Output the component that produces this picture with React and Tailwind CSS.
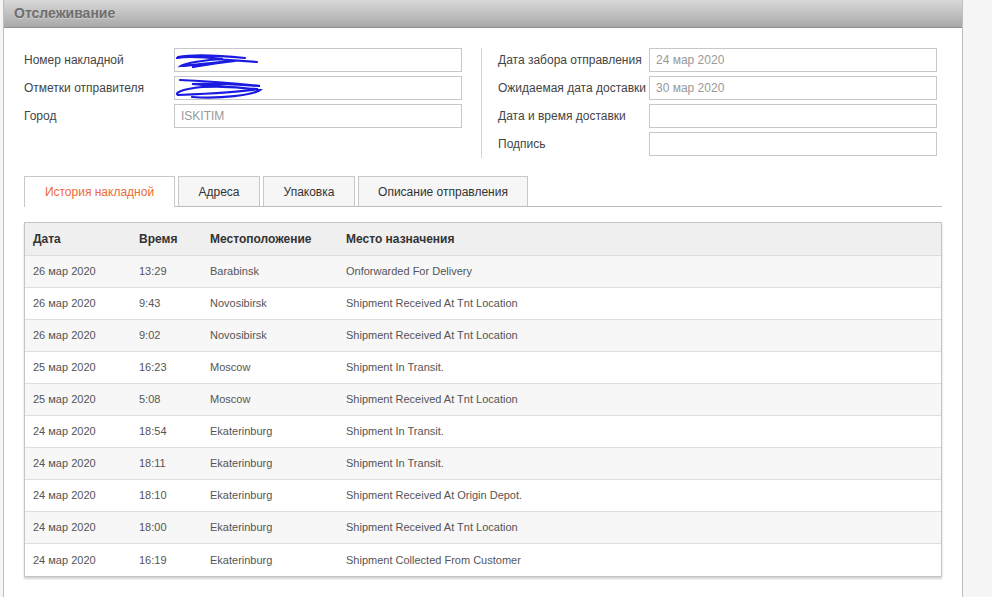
import React from "react";

const rows = [
  ["26 мар 2020", "13:29", "Barabinsk", "Onforwarded For Delivery"],
  ["26 мар 2020", "9:43", "Novosibirsk", "Shipment Received At Tnt Location"],
  ["26 мар 2020", "9:02", "Novosibirsk", "Shipment Received At Tnt Location"],
  ["25 мар 2020", "16:23", "Moscow", "Shipment In Transit."],
  ["25 мар 2020", "5:08", "Moscow", "Shipment Received At Tnt Location"],
  ["24 мар 2020", "18:54", "Ekaterinburg", "Shipment In Transit."],
  ["24 мар 2020", "18:11", "Ekaterinburg", "Shipment In Transit."],
  ["24 мар 2020", "18:10", "Ekaterinburg", "Shipment Received At Origin Depot."],
  ["24 мар 2020", "18:00", "Ekaterinburg", "Shipment Received At Tnt Location"],
  ["24 мар 2020", "16:19", "Ekaterinburg", "Shipment Collected From Customer"],
];

function Field({ label, value, children, labelW = "w-[150px]" }) {
  return (
    <div className="flex items-center h-[24px]">
      <div className={`${labelW} shrink-0 text-[12px] text-[#444]`}>{label}</div>
      <div className="relative w-[288px] h-[24px] border border-[#c8c8c8] bg-white flex items-center px-[6px] text-[12px] text-[#999]">
        {value}
        {children}
      </div>
    </div>
  );
}

function Scribble1() {
  return (
    <svg className="absolute left-0 top-[1px]" width="90" height="22" viewBox="0 0 90 22">
      <path d="M3 7 C20 4, 50 6, 70 8 M2 8 C10 6, 30 7, 48 9 C30 10, 10 13, 6 16 C20 15, 40 12, 60 11 C50 12, 30 15, 18 17 M40 9 L82 12" stroke="#1a1ae0" strokeWidth="2.2" fill="none" strokeLinecap="round" />
    </svg>
  );
}

function Scribble2() {
  return (
    <svg className="absolute left-[-3px] top-[-2px]" width="100" height="28" viewBox="0 0 100 28">
      <path d="M8 5 C30 6, 60 8, 88 11 C70 10, 40 8, 20 9 C40 11, 70 13, 86 14 C70 17, 30 19, 6 20 C2 18, 10 14, 30 12 C50 11, 75 13, 88 15 C80 20, 50 24, 20 22" stroke="#1a1ae0" strokeWidth="2.2" fill="none" strokeLinecap="round" />
    </svg>
  );
}

export default function App() {
  return (
    <div className="w-[992px] h-[597px] bg-[#f5f5f5] overflow-hidden" style={{ fontFamily: '"Liberation Sans", Arial, sans-serif' }}>
      <div className="ml-[3px] w-[960px] h-[597px] bg-white border-l border-r border-[#bdbdbd] flex flex-col">
        <div className="h-[28px] shrink-0 bg-gradient-to-b from-[#d9d9d9] to-[#a9a9a9] border-b border-[#8f8f8f] flex items-center pl-[10px]">
          <span className="text-[14px] font-bold text-[#6e6e6e]" style={{ textShadow: "0 1px 0 rgba(255,255,255,0.35)" }}>Отслеживание</span>
        </div>
        <div className="pl-[20px] pr-[20px] pt-[20px]">
          <div className="flex">
            <div className="flex flex-col gap-[4px] w-[457px]">
              <Field label="Номер накладной"><Scribble1 /></Field>
              <Field label="Отметки отправителя"><Scribble2 /></Field>
              <Field label="Город" value="ISKITIM" />
            </div>
            <div className="w-px bg-[#d4d4d4] h-[110px]" />
            <div className="flex flex-col gap-[4px] pl-[16px]">
              <Field labelW="w-[151px]" label="Дата забора отправления" value="24 мар 2020" />
              <Field labelW="w-[151px]" label="Ожидаемая дата доставки" value="30 мар 2020" />
              <Field labelW="w-[151px]" label="Дата и время доставки" value="" />
              <Field labelW="w-[151px]" label="Подпись" value="" />
            </div>
          </div>

          <div className="mt-[18px] w-[918px] flex items-end gap-[3px] border-b border-[#bdbdbd] h-[31px]">
            <div className="h-[31px] w-[151px] bg-white border border-b-0 border-[#c8c8c8] flex items-center justify-center text-[12px] text-[#ec6a37] -mb-px">История накладной</div>
            <div className="h-[30px] w-[82px] bg-[#f6f6f6] border border-b-0 border-[#c8c8c8] flex items-center justify-center text-[12px] text-[#333]">Адреса</div>
            <div className="h-[30px] w-[92px] bg-[#f6f6f6] border border-b-0 border-[#c8c8c8] flex items-center justify-center text-[12px] text-[#333]">Упаковка</div>
            <div className="h-[30px] w-[170px] bg-[#f6f6f6] border border-b-0 border-[#c8c8c8] flex items-center justify-center text-[12px] text-[#333]">Описание отправления</div>
          </div>

          <div className="mt-[15px] w-[918px] border border-[#c4c4c4] shadow-[0_2px_2px_rgba(0,0,0,0.18)]">
            <div className="h-[33px] bg-[#efefef] flex items-center text-[12px] font-bold text-[#333] border-b border-[#dcdcdc]">
              <div className="w-[114px] pl-[8px]">Дата</div>
              <div className="w-[71px]">Время</div>
              <div className="w-[136px]">Местоположение</div>
              <div>Место назначения</div>
            </div>
            {rows.map((r, i) => (
              <div key={i} className={`h-[32px] flex items-center text-[11px] text-[#555] ${i < rows.length - 1 ? "border-b border-[#dedede]" : ""} ${i % 2 === 0 ? "bg-[#f7f7f7]" : "bg-white"}`}>
                <div className="w-[114px] pl-[8px]">{r[0]}</div>
                <div className="w-[71px]">{r[1]}</div>
                <div className="w-[136px]">{r[2]}</div>
                <div>{r[3]}</div>
              </div>
            ))}
          </div>
        </div>
      </div>
    </div>
  );
}
